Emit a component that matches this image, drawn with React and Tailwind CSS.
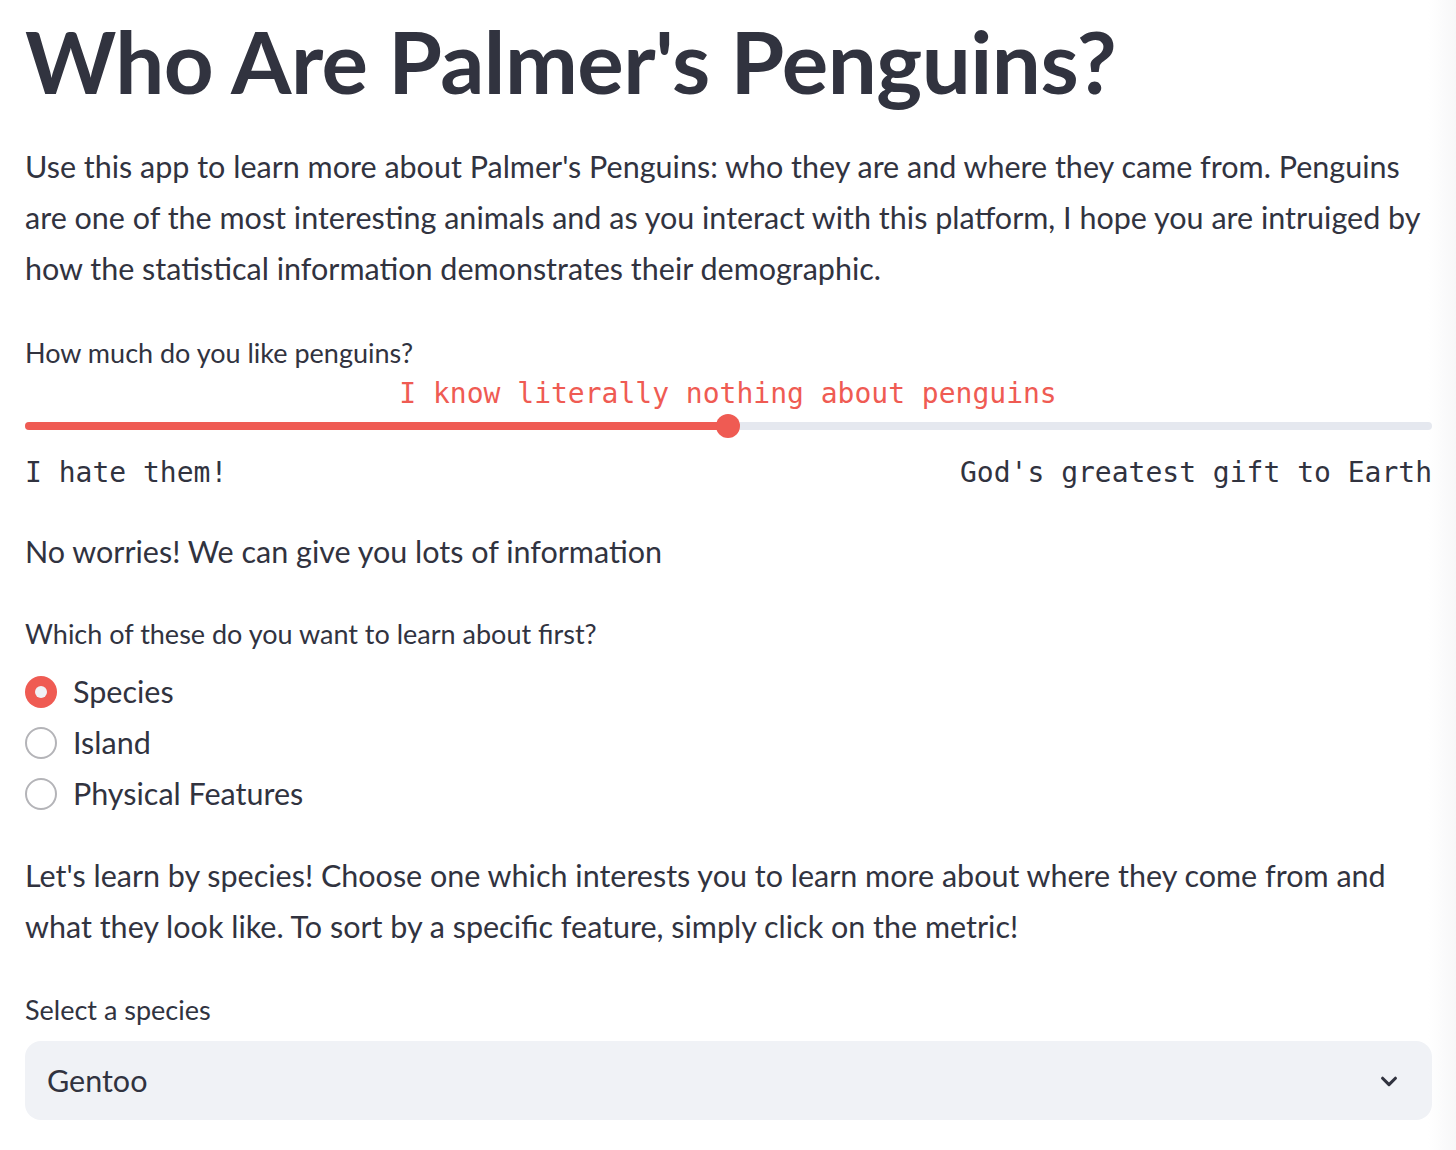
import React from 'react';

const sans = { fontFamily: 'Lato, "Noto Sans", sans-serif' };
const mono = { fontFamily: '"DejaVu Sans Mono", "Liberation Mono", monospace' };

const Label = ({ children, className = '' }) => (
  <div className={`text-[27px] leading-[40px] text-[#31333f] ${className}`}>{children}</div>
);

const Radio = ({ checked, label }) => (
  <div className="flex items-center h-[51px]">
    {checked ? (
      <span className="w-[32px] h-[32px] rounded-full bg-[#ef5b53] flex items-center justify-center">
        <span className="w-[12px] h-[12px] rounded-full bg-[#f0f2f6]" />
      </span>
    ) : (
      <span className="w-[32px] h-[32px] rounded-full border-2 border-[#b4b4b8] bg-white" />
    )}
    <span className="ml-[16px] text-[30.5px] text-[#31333f]">{label}</span>
  </div>
);

export default function App() {
  const pct = (728 - 25) / (1432 - 25) * 100;

  return (
    <div className="relative w-[1456px] min-h-[1150px] bg-white overflow-hidden" style={sans}>
      {/* faint right gutter */}
      <div className="absolute top-0 right-0 w-[28px] h-full bg-gradient-to-r from-white to-[#f7f7f8]" />

      <div className="relative pl-[25px] pr-[24px] text-[#31333f]">
        {/* Title */}
        <h1 className="pt-[11px] text-[87px] leading-[100px] font-bold tracking-[-0.5px]">
          Who Are Palmer's Penguins?
        </h1>

        {/* Intro */}
        <p className="mt-[30px] text-[30.5px] leading-[51px]">
          Use this app to learn more about Palmer's Penguins: who they are and where they came from. Penguins<br />
          are one of the most interesting animals and as you interact with this platform, I hope you are intruiged by<br />
          how the statistical information demonstrates their demographic.
        </p>

        {/* Slider */}
        <Label className="mt-[39px]">How much do you like penguins?</Label>
        <div className="relative h-[39px] mt-[1px]">
          <div
            className="absolute top-0 -translate-x-1/2 whitespace-nowrap text-[28px] leading-[40px] text-[#ef5b53]"
            style={{ left: `${pct}%`, ...mono }}
          >
            I know literally nothing about penguins
          </div>
        </div>
        <div className="relative h-[30px] flex items-center -mt-[2px]">
          <div className="w-full h-[8px] rounded-full bg-[#e5e8ef]">
            <div className="h-full rounded-full bg-[#ef5b53]" style={{ width: `${pct}%` }} />
          </div>
          <div
            className="absolute top-1/2 w-[24px] h-[24px] -translate-x-1/2 -translate-y-1/2 rounded-full bg-[#ef5b53]"
            style={{ left: `${pct}%` }}
          />
        </div>
        <div className="mt-[12px] flex justify-between text-[28px] leading-[40px] text-[#31333f]" style={mono}>
          <span>I hate them!</span>
          <span>God's greatest gift to Earth</span>
        </div>

        <p className="mt-[33px] text-[30.5px] leading-[51px]">No worries! We can give you lots of information</p>

        {/* Radio */}
        <Label className="mt-[37px]">Which of these do you want to learn about first?</Label>
        <div className="mt-[12px] flex flex-col">
          <Radio checked label="Species" />
          <Radio label="Island" />
          <Radio label="Physical Features" />
        </div>

        <p className="mt-[31px] text-[30.5px] leading-[51px]">
          Let's learn by species! Choose one which interests you to learn more about where they come from and<br />
          what they look like. To sort by a specific feature, simply click on the metric!
        </p>

        {/* Select */}
        <Label className="mt-[38px]">Select a species</Label>
        <div className="mt-[11px] h-[79px] rounded-[16px] bg-[#f0f2f6] flex items-center justify-between pl-[22px] pr-[32px]">
          <span className="text-[30.5px] text-[#31333f]">Gentoo</span>
          <svg width="22" height="22" viewBox="0 0 24 24" fill="none" stroke="#31333f" strokeWidth="3.4" strokeLinecap="round" strokeLinejoin="round">
            <path d="M5 9l7 7 7-7" />
          </svg>
        </div>
      </div>
    </div>
  );
}
